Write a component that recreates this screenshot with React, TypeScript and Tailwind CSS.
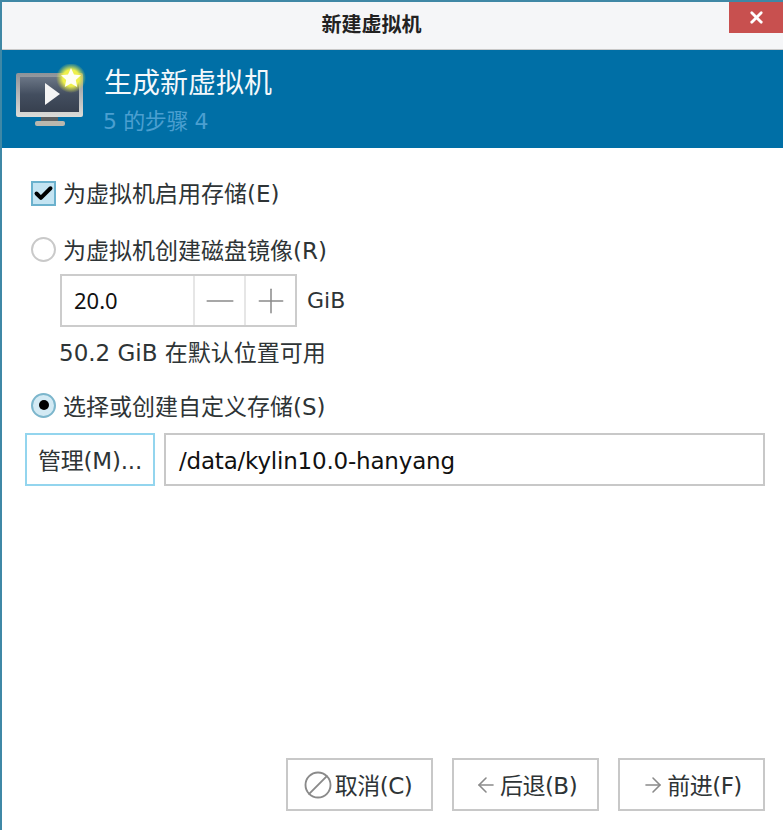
import { Minus, Plus, ArrowLeft, ArrowRight, Ban, Check, X } from "lucide-react";

const fontClass = "font-['DejaVu_Sans','Noto_Sans_CJK_SC',sans-serif]";

const WizardIcon = () => (
  <svg width="70" height="66" viewBox="0 0 70 66" className="mt-[14px] shrink-0 self-start">
    <defs>
      <linearGradient id="screen" x1="0" y1="0" x2="0" y2="1">
        <stop offset="0" stopColor="#6b7686" />
        <stop offset="0.5" stopColor="#434e5f" />
        <stop offset="1" stopColor="#37404f" />
      </linearGradient>
      <linearGradient id="frame" x1="0" y1="0" x2="0" y2="1">
        <stop offset="0" stopColor="#8d9298" />
        <stop offset="1" stopColor="#dcdcd8" />
      </linearGradient>
      <radialGradient id="glow">
        <stop offset="0.55" stopColor="#eef04a" />
        <stop offset="1" stopColor="#d8e04a" stopOpacity="0" />
      </radialGradient>
    </defs>
    <rect x="0" y="9" width="67" height="44" rx="2" fill="url(#frame)" />
    <rect x="4" y="13" width="59" height="35" fill="url(#screen)" />
    <path d="M29 19 L44 30 L29 41 Z" fill="#f4f4f4" />
    <rect x="25" y="53" width="17" height="4" fill="#5c5f60" />
    <rect x="19" y="57" width="30" height="5" rx="2" fill="#b9b7ae" />
    <circle cx="55" cy="14" r="15" fill="url(#glow)" />
    <path
      d="M55 4 L58 10.5 L65 11.3 L59.8 16 L61.2 23 L55 19.5 L48.8 23 L50.2 16 L45 11.3 L52 10.5 Z"
      fill="#fffff2"
    />
  </svg>
);

const Radio = ({ on }: { on?: boolean }) => (
  <span
    className={`flex h-[25px] w-[25px] shrink-0 items-center justify-center rounded-full border-2 ${
      on ? "border-[#7cb6cc] bg-[#d3eaf4]" : "border-[#c9c9c9] bg-white"
    }`}
  >
    {on && <span className="h-[10px] w-[10px] rounded-full bg-black" />}
  </span>
);

const FooterButton = ({ icon, label }: { icon: React.ReactNode; label: string }) => (
  <button
    type="button"
    className="flex h-[53px] w-[147px] items-center justify-center gap-[2px] border-2 border-[#c8c8c8] bg-white text-[23px] tracking-[-0.5px] text-[#2e3436]"
  >
    {icon}
    <span className="pt-[3px]">{label}</span>
  </button>
);

export default function App() {
  return (
    <div
      className={`${fontClass} flex h-[830px] w-[783px] flex-col overflow-hidden border-l-2 border-t-2 border-[#3f88a6] bg-white text-[#2e3436]`}
    >
      {/* title bar */}
      <div className="relative flex h-[47px] shrink-0 items-center justify-center bg-[#f5f6f8] pr-[42px] pb-[1px] text-[20px] font-bold text-[#222]">
        新建虚拟机
        <div className="absolute right-0 top-0 flex h-[31px] w-[54px] items-center justify-center bg-[#c8504f]">
          <X size={19} strokeWidth={3.5} className="text-white" />
        </div>
      </div>

      {/* wizard header */}
      <div className="flex h-[99px] shrink-0 items-center gap-[18px] border-t border-[#c9c9c9] bg-[#006fa6] pl-[14px]">
        <WizardIcon />
        <div className="flex flex-col pt-[3px]">
          <span className="text-[28px] leading-[40px] text-[#f4f8fb]">生成新虚拟机</span>
          <span className="mt-[2px] -ml-[1px] text-[22px] leading-[32px] tracking-[-0.4px] text-[#4b9fd0]">5 的步骤 4</span>
        </div>
      </div>

      {/* form */}
      <div className="flex flex-1 flex-col pl-[23px] pr-[18px] text-[23px]">
        <label className="mt-[31px] flex h-[28px] items-center gap-[7px] pl-[6px]">
          <span className="flex h-[25px] w-[25px] shrink-0 items-center justify-center border-2 border-[#6bb1cd] bg-[#c4e4f2]">
            <Check size={21} strokeWidth={4.5} className="text-black" />
          </span>
          <span className="pt-[3px]">为虚拟机启用存储(E)</span>
        </label>

        <label className="mt-[28px] flex h-[28px] items-center gap-[7px] pl-[6px]">
          <Radio />
          <span className="pt-[4px]">为虚拟机创建磁盘镜像(R)</span>
        </label>

        <div className="mt-[11px] flex items-center gap-[10px] pl-[35px]">
          <div className="flex h-[53px] w-[237px] items-stretch border-2 border-[#cccccc]">
            <span className="flex flex-1 items-center pl-[12px] font-['Noto_Sans'] text-[22px] text-[#111]">20.0</span>
            <span className="flex w-[51px] items-center justify-center border-l-2 border-[#e6e6e6]">
              <Minus size={44} strokeWidth={0.8} className="shrink-0 text-[#8a8a8a]" />
            </span>
            <span className="flex w-[51px] items-center justify-center border-l-2 border-[#e6e6e6]">
              <Plus size={40} strokeWidth={0.9} className="shrink-0 text-[#8a8a8a]" />
            </span>
          </div>
          <span className="text-[22px]">GiB</span>
        </div>

        <div className="mt-[10px] h-[32px] pl-[34px] leading-[32px]">50.2 GiB 在默认位置可用</div>

        <label className="mt-[22px] flex h-[28px] items-center gap-[7px] pl-[6px]">
          <Radio on />
          <span className="pt-[4px]">选择或创建自定义存储(S)</span>
        </label>

        <div className="mt-[14px] flex gap-[9px]">
          <button
            type="button"
            className="flex h-[53px] w-[130px] shrink-0 items-center justify-center border-2 border-[#93d5ee] bg-white tracking-[-0.2px]"
          >
            <span className="pt-[3px]">管理(M)...</span>
          </button>
          <div className="flex h-[53px] flex-1 items-center border-2 border-[#c8c8c8] pl-[13px] pt-[3px] tracking-[-0.2px] text-[#111]">
            /data/kylin10.0-hanyang
          </div>
        </div>

        <div className="mt-auto mb-[19px] flex justify-end gap-[19px]">
          <FooterButton icon={<Ban size={30} strokeWidth={1.5} className="-ml-[4px] -scale-x-100 text-[#8a8a8a]" />} label="取消(C)" />
          <FooterButton icon={<ArrowLeft size={24} strokeWidth={1.6} className="text-[#8a8a8a]" />} label="后退(B)" />
          <FooterButton icon={<ArrowRight size={24} strokeWidth={1.6} className="text-[#8a8a8a]" />} label="前进(F)" />
        </div>
      </div>
    </div>
  );
}
